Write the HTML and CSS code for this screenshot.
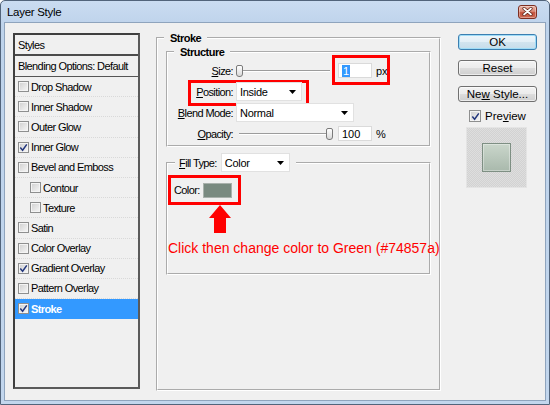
FILE: index.html
```html
<!DOCTYPE html>
<html>
<head>
<meta charset="utf-8">
<title>Layer Style</title>
<link rel="stylesheet" href="styles.css">
</head>
<body>
<div class="window">
  <div class="titlebar">
    <span class="title">Layer Style</span>
    <span class="close">
      <svg width="11" height="9" viewBox="0 0 11 9"><path d="M2 1.5 L9 7.5 M9 1.5 L2 7.5" stroke="#5e2418" stroke-width="3.2" stroke-linecap="round"/><path d="M2 1.5 L9 7.5 M9 1.5 L2 7.5" stroke="#fff" stroke-width="1.7" stroke-linecap="round"/></svg>
    </span>
  </div>
  <div class="client">
    <div class="list">
      <div class="list-head">Styles</div>
      <div class="list-blend">Blending Options: Default</div>
      <div class="item"><span class="cb"></span>Drop Shadow</div>
      <div class="item"><span class="cb"></span>Inner Shadow</div>
      <div class="item"><span class="cb"></span>Outer Glow</div>
      <div class="item"><span class="cb"><svg class="chk" viewBox="0 0 9 9"><path d="M1.3 4.6 L3.6 7.2 L7.8 1.4"/></svg></span>Inner Glow</div>
      <div class="item"><span class="cb"></span>Bevel and Emboss</div>
      <div class="item sub"><span class="cb"></span>Contour</div>
      <div class="item sub"><span class="cb"></span>Texture</div>
      <div class="item"><span class="cb"></span>Satin</div>
      <div class="item"><span class="cb"></span>Color Overlay</div>
      <div class="item"><span class="cb"><svg class="chk" viewBox="0 0 9 9"><path d="M1.3 4.6 L3.6 7.2 L7.8 1.4"/></svg></span>Gradient Overlay</div>
      <div class="item"><span class="cb"></span>Pattern Overlay</div>
      <div class="item sel"><span class="cb"><svg class="chk" viewBox="0 0 9 9"><path d="M1.3 4.6 L3.6 7.2 L7.8 1.4"/></svg></span>Stroke</div>
    </div>

    <fieldset class="group stroke">
      <legend class="glegend">Stroke</legend>
      <fieldset class="group structure">
        <legend class="glegend">Structure</legend>
        <div class="form">
          <div class="lbl"><span><u>S</u>ize:</span></div>
          <div class="ctl">
            <div class="slider"><span class="thumb"></span></div>
            <div class="input"><span class="hl">1</span></div>
            <span class="unit">px</span>
            <span class="redbox rb-size"></span>
          </div>

          <div class="lbl"><span><u>P</u>osition:</span><span class="redbox rb-pos"></span></div>
          <div class="ctl">
            <div class="select sel-pos"><span>Inside</span><svg class="arr" width="7" height="4" viewBox="0 0 7 4"><path d="M0 0 H7 L3.5 4 Z"/></svg></div>
          </div>

          <div class="lbl"><span><u>B</u>lend Mode:</span></div>
          <div class="ctl">
            <div class="select sel-blend"><span>Normal</span><svg class="arr" width="7" height="4" viewBox="0 0 7 4"><path d="M0 0 H7 L3.5 4 Z"/></svg></div>
          </div>

          <div class="lbl"><span><u>O</u>pacity:</span></div>
          <div class="ctl">
            <div class="slider max"><span class="thumb"></span></div>
            <div class="input"><span>100</span></div>
            <span class="unit">%</span>
          </div>
        </div>
      </fieldset>

      <fieldset class="group fill">
        <legend class="flegend">
          <span class="flabel"><u>F</u>ill Type:</span>
          <span class="select sel-fill"><span>Color</span><svg class="arr" width="7" height="4" viewBox="0 0 7 4"><path d="M0 0 H7 L3.5 4 Z"/></svg></span>
        </legend>
        <div class="colorbox">
          <span class="clabel">Color:</span>
          <span class="swatch"></span>
        </div>
        <svg class="arrow" width="23" height="28" viewBox="0 0 23 28"><polygon points="11,0 22,13 17,13 17,28 5,28 5,13 0,13" fill="#ff0000"/></svg>
        <div class="note">Click then change color to Green (#74857a)</div>
      </fieldset>
    </fieldset>

    <div class="buttons">
      <div class="btn default"><span>OK</span></div>
      <div class="btn"><span>Reset</span></div>
      <div class="btn"><span>Ne<u>w</u> Style...</span></div>
      <div class="preview-row">
        <span class="cb big"><svg class="chk" viewBox="0 0 9 9"><path d="M1.3 4.6 L3.6 7.2 L7.8 1.4"/></svg></span>
        <span>Pre<u>v</u>iew</span>
      </div>
      <div class="preview"><span class="pv-swatch"></span></div>
    </div>
  </div>
</div>
</body>
</html>
```

FILE: styles.css
```css
* { box-sizing: border-box; }
html, body { margin: 0; padding: 0; }
body {
  width: 550px;
  height: 405px;
  overflow: hidden;
  font-family: "Liberation Sans", Arial, sans-serif;
  font-size: 11px;
  color: #000;
  background: #fff;
}

.window {
  width: 550px;
  height: 405px;
  display: flex;
  flex-direction: column;
  background: linear-gradient(#cadcf1, #bed3eb 24px, #c2d6ed);
  border: 1px solid #52647b;
  border-radius: 5px 5px 0 0;
  padding: 0 3px 3px;
}

.titlebar {
  height: 21px;
  flex: none;
  display: flex;
  align-items: center;
  justify-content: space-between;
  padding: 0 9px 0 3px;
}
.title { font-size: 11.5px; letter-spacing: -0.3px; }
.close {
  width: 19px;
  height: 14px;
  border: 1px solid #7d2f22;
  border-radius: 3px;
  background: linear-gradient(#eab3a6, #d98876 45%, #c5533e 55%, #cf6a52);
  display: flex;
  align-items: center;
  justify-content: center;
  box-shadow: inset 0 0 0 1px rgba(255,255,255,0.35);
}
.close svg { display: block; }

.client {
  flex: 1;
  background: #f0f0f0;
  border: 1px solid #8fa4bd;
  display: flex;
  align-items: flex-start;
  padding: 8px 0 0 8px;
}

/* ---------- styles list ---------- */
.list {
  margin-top: 2px;
  width: 127px;
  height: 356px;
  flex: none;
  border: 2px solid #4b4b4b;
  border-color: #3f3f3f #5a5a5a #5a5a5a #3f3f3f;
  background: #f0f0f0;
  letter-spacing: -0.6px;
}
.list-head {
  height: 21px;
  padding-left: 3px;
  display: flex;
  align-items: center;
  border-bottom: 2px solid #4b4b4b;
}
.list-blend {
  height: 21px;
  padding-left: 3px;
  display: flex;
  align-items: center;
  border-bottom: 1px solid #555;
}
.item {
  height: 20.2px;
  padding-left: 3px;
  display: flex;
  align-items: center;
  gap: 2px;
  border-bottom: 1px dotted #d9d9d9;
}
.item.sub { padding-left: 15px; }
.item.sel {
  background: #3399ff;
  color: #fff;
  font-weight: bold;
  border-bottom-color: #3399ff;
}

.cb {
  width: 11px;
  height: 11px;
  flex: none;
  border: 1px solid #8e8f8f;
  background: linear-gradient(135deg, #cfcfcf, #f7f7f7);
  box-shadow: inset 0 0 0 1px #f4f4f4;
  display: flex;
  align-items: center;
  justify-content: center;
}
.cb.big { width: 12px; height: 12px; }
.chk { width: 9px; height: 9px; display: block; }
.chk path { fill: none; stroke: #23377d; stroke-width: 1.5; }

/* ---------- group boxes ---------- */
.group {
  margin: 0;
  min-width: 0;
  border: 2px groove #ffffff;
}
.glegend {
  font-weight: bold;
  line-height: 14px;
  letter-spacing: -0.5px;
  padding: 0 6px;
}
.stroke {
  margin-left: 16px;
  width: 285px;
  height: 360px;
  flex: none;
  padding: 0 8px;
}
.stroke > .glegend { margin-left: -2px; }
.structure {
  padding: 0 0 1px 0;
}
.structure > .glegend { margin-left: 6px; }

.form {
  display: grid;
  grid-template-columns: 65px 1fr;
  grid-auto-rows: 21px;
  column-gap: 3px;
  padding-top: 1px;
  letter-spacing: -0.6px;
}
.lbl {
  position: relative;
  display: flex;
  align-items: center;
  justify-content: flex-end;
}
.ctl {
  position: relative;
  display: flex;
  align-items: center;
}

.slider {
  width: 97px;
  height: 12px;
  display: flex;
  background:
    linear-gradient(#9c9c9c, #9c9c9c) 3px 5px / 91px 1px no-repeat,
    linear-gradient(#ffffff, #ffffff) 3px 6px / 91px 1px no-repeat;
}
.slider.max { justify-content: flex-end; }
.thumb {
  width: 7px;
  height: 12px;
  border: 1px solid #7a7a7a;
  border-radius: 2px 2px 3px 3px;
  background: linear-gradient(#ffffff, #d8d8d8);
}
.input {
  width: 34px;
  height: 15px;
  margin-left: 5px;
  background: #fff;
  border: 1px solid #dadada;
  padding-left: 3px;
  display: flex;
  align-items: center;
  letter-spacing: 0;
}
.hl {
  background: #3399ff;
  color: #fff;
  padding: 0 1px;
  line-height: 12px;
}
.unit { margin-left: 4px; letter-spacing: 0; }

.select {
  height: 19px;
  background: #fff;
  border: 1px solid #e1e1e1;
  display: flex;
  align-items: center;
  justify-content: space-between;
  padding: 0 5px 0 3px;
  letter-spacing: -0.3px;
}
.arr { display: block; flex: none; }
.sel-pos { width: 66px; }
.sel-blend { width: 118px; }
.sel-fill { width: 69px; }

.redbox {
  position: absolute;
  border: 3px solid #ff0000;
  pointer-events: none;
}
.rb-size { left: 96px; top: -5px; width: 58px; height: 30px; }
.rb-pos { left: 20px; top: -1px; width: 121px; height: 26px; }

.fill {
  margin-top: 6px;
  height: 122px;
  padding: 3px 0 0 0;
}
.flegend {
  margin-left: 7px;
  padding: 0 6px 0 4px;
  display: flex;
  align-items: center;
  gap: 4px;
  letter-spacing: -0.6px;
}
.colorbox {
  width: 73px;
  height: 30px;
  border: 3px solid #ff0000;
  display: flex;
  align-items: center;
  gap: 3px;
  padding-left: 3px;
  letter-spacing: -0.6px;
}
.swatch {
  width: 29px;
  height: 15px;
  background: #798a80;
  border: 1px solid #a9b1ac;
}
.arrow { display: block; margin-left: 41px; }
.note {
  margin-top: 7px;
  font-size: 14px;
  line-height: 16px;
  color: #ff0000;
  white-space: nowrap;
}

/* ---------- buttons ---------- */
.buttons {
  margin-left: 17px;
  margin-top: 3px;
  width: 79px;
  flex: none;
  display: flex;
  flex-direction: column;
}
.btn {
  height: 16px;
  margin-bottom: 10px;
  border: 1px solid #707070;
  border-radius: 3px;
  background: linear-gradient(#f3f3f3, #ebebeb 50%, #dddddd 50%, #cfcfcf);
  box-shadow: inset 0 0 0 1px rgba(255,255,255,0.6);
  display: flex;
  align-items: center;
  justify-content: center;
  font-size: 11.5px;
}
.btn.default {
  border-color: #3c7fb1;
  box-shadow: inset 0 0 0 1px #9fdcf7;
  background: linear-gradient(#eef6fb, #e2eef6 50%, #d2e4ef 50%, #c6dcea);
}
.preview-row {
  margin-top: -3px;
  height: 14px;
  display: flex;
  align-items: center;
  gap: 4px;
  padding-left: 11px;
  font-size: 11.5px;
}
.preview {
  margin-top: 4px;
  margin-left: 8px;
  width: 61px;
  height: 61px;
  border: 1px solid #e4e4e4;
  background: repeating-conic-gradient(#dedede 0 25%, #d2d2d2 0 50%) 0 0 / 2px 2px;
  display: flex;
  align-items: center;
  justify-content: center;
}
.pv-swatch {
  width: 29px;
  height: 29px;
  border: 1px solid #7e8f83;
  background: linear-gradient(#cad6cb, #a9b9ac);
  box-shadow: inset 0 0 0 1px rgba(255,255,255,0.35);
}
```
